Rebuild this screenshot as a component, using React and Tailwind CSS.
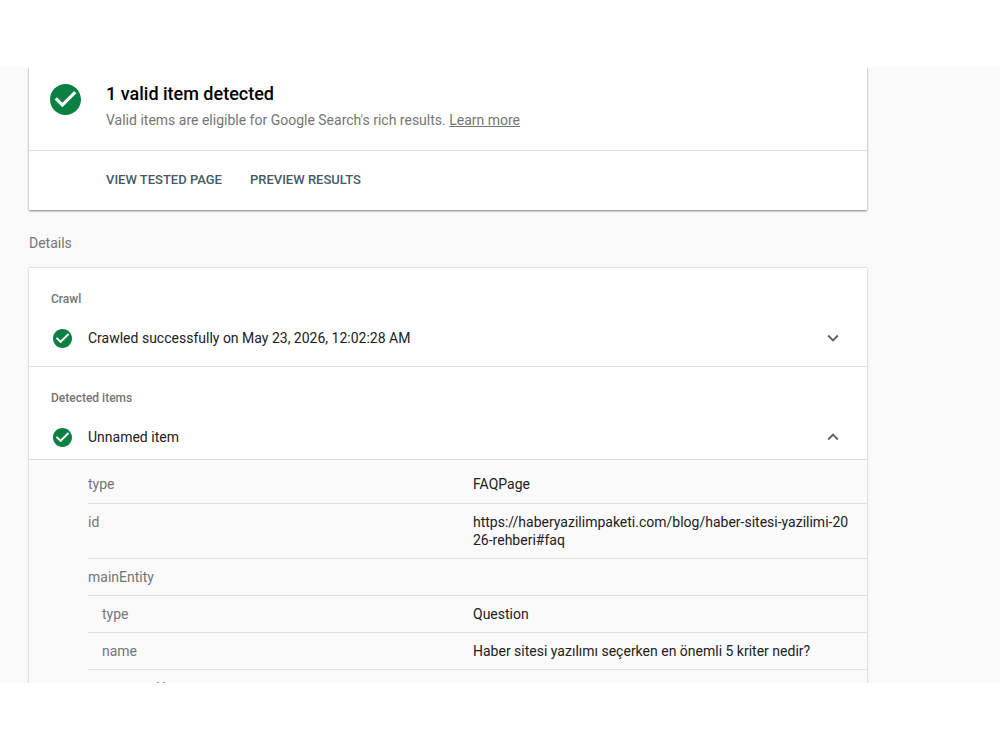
import React, { useState } from 'react';

const CheckCircle = ({ className }) => (
  <svg viewBox="2 2 20 20" className={className} aria-hidden="true">
    <circle cx="12" cy="12" r="9" fill="#fff" />
    <path
      fill="#0b8043"
      d="M12 2C6.48 2 2 6.48 2 12s4.48 10 10 10 10-4.48 10-10S17.52 2 12 2zm-2 15l-5-5 1.41-1.41L10 14.17l7.59-7.59L19 8l-9 9z"
    />
  </svg>
);

const Chevron = ({ open }) => (
  <svg viewBox="0 0 24 24" className="h-[22px] w-[22px] shrink-0" fill="#5f6368" aria-hidden="true">
    {open ? (
      <path d="M12 8l-6 6 1.41 1.41L12 10.83l4.59 4.58L18 14z" />
    ) : (
      <path d="M16.59 8.59L12 13.17 7.41 8.59 6 10l6 6 6-6z" />
    )}
  </svg>
);

const properties = [
  { name: 'type', value: 'FAQPage' },
  { name: 'id', value: 'https://haberyazilimpaketi.com/blog/haber-sitesi-yazilimi-2026-rehberi#faq' },
  { name: 'mainEntity', value: '' },
  { name: 'type', value: 'Question', nested: true },
  { name: 'name', value: 'Haber sitesi yazılımı seçerken en önemli 5 kriter nedir?', nested: true },
  { name: 'acceptedAnswer', value: '', nested: true },
];

const ItemRow = ({ label, open, onClick }) => (
  <button
    type="button"
    aria-expanded={open}
    onClick={onClick}
    className="flex w-full items-center pr-[23px] pl-6 text-left text-[#212121]"
  >
    <CheckCircle className="mr-4 h-[19px] w-[19px] shrink-0" />
    <span className="flex-1">{label}</span>
    <Chevron open={open} />
  </button>
);

const App = () => {
  const [crawlOpen, setCrawlOpen] = useState(false);
  const [itemOpen, setItemOpen] = useState(true);

  return (
    <div className="flex h-screen flex-col bg-white py-[67px] font-['Roboto',sans-serif] text-[14px] leading-[18px] text-[#757575]">
      <main className="min-h-0 flex-1 overflow-hidden bg-[#fafafa] pr-[133px] pl-[29px]">
        <section className="bg-white shadow-[0_1px_2px_rgba(0,0,0,0.5)]">
          <div className="flex items-start border-b border-[#e0e0e0] pt-[17px] pb-[21px] pl-[21px]">
            <CheckCircle className="mr-[25px] h-[31px] w-[31px] shrink-0" />
            <div>
              <h1 className="text-[18px] leading-5 font-medium text-black">1 valid item detected</h1>
              <p className="mt-[7px]">
                Valid items are eligible for Google Search&apos;s rich results.{' '}
                <a href="#learn-more" className="underline">
                  Learn more
                </a>
              </p>
            </div>
          </div>
          <div className="flex gap-7 pt-5 pb-[21px] pl-[77px] text-[13px] font-medium text-[#455a64]">
            <button type="button">VIEW TESTED PAGE</button>
            <button type="button">PREVIEW RESULTS</button>
          </div>
        </section>

        <h2 className="mt-6 mb-4">Details</h2>

        <section className="bg-white shadow-[0_0_2px_rgba(0,0,0,0.3)]">
          <div className="border-b border-[#e0e0e0] pt-[22px] pb-[17px]">
            <h3 className="mb-[19px] pl-[22px] text-[12px] font-medium">Crawl</h3>
            <ItemRow
              label="Crawled successfully on May 23, 2026, 12:02:28 AM"
              open={crawlOpen}
              onClick={() => setCrawlOpen(!crawlOpen)}
            />
          </div>
          <div className="border-b border-[#e0e0e0] pt-[22px] pb-[11px]">
            <h3 className="mb-[19px] pl-[22px] text-[12px] font-medium">Detected items</h3>
            <ItemRow label="Unnamed item" open={itemOpen} onClick={() => setItemOpen(!itemOpen)} />
          </div>
          {itemOpen && (
            <div className="bg-[#fafafa] pt-[6px] pl-[59px]">
              <table className="w-full table-fixed">
                <tbody>
                  {properties.map((prop, idx) => (
                    <tr key={idx} className="border-b border-[#e0e0e0] align-top">
                      <th
                        scope="row"
                        className={`h-[37px] w-[385px] py-[9px] text-left font-normal ${prop.nested ? 'pl-[14px]' : ''}`}
                      >
                        {prop.name}
                      </th>
                      <td className="py-[9px] pr-4 break-all text-[#212121]">{prop.value}</td>
                    </tr>
                  ))}
                </tbody>
              </table>
            </div>
          )}
        </section>
      </main>
    </div>
  );
};

export default App;
